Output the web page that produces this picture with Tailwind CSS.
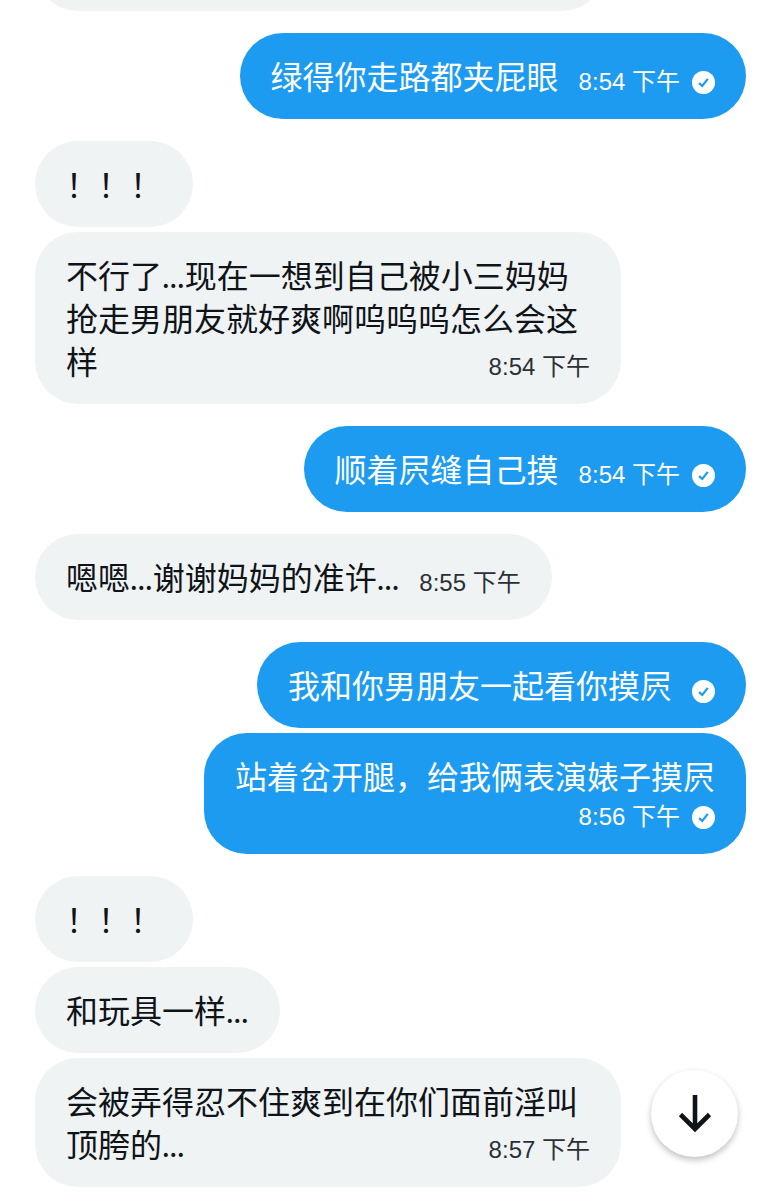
<!DOCTYPE html>
<html lang="zh-CN">
<head>
    <meta charset="UTF-8">
    <meta name="viewport" content="width=device-width, initial-scale=1.0">
    <title>私信</title>
    <script src="https://cdn.jsdelivr.net/npm/@tailwindcss/browser@4"></script>
</head>
<body class="bg-white h-screen overflow-hidden font-['Lato','Noto_Sans_CJK_SC',sans-serif] text-[32px] leading-[43px] text-[#0f1419]">
    <!-- check mark shared by the sent messages -->
    <svg class="hidden">
        <symbol id="sent" viewBox="0 0 24 24">
            <circle cx="12" cy="12" r="12" fill="#fff"/>
            <path d="M7.4 12.6l3.3 3 5.800-7.400" fill="none" stroke="#1d9bf0" stroke-width="2.3"/>
        </symbol>
    </svg>

    <main class="flex flex-col gap-[22px] px-[35px]">
        <div class="h-[11px] w-[570px] flex items-end">
            <div class="h-[86px] w-full shrink-0 rounded-[43px] bg-[#eff3f4]"></div>
        </div>

        <div class="flex flex-col items-end">
            <div class="flex items-end rounded-[43px] bg-[#1d9bf0] text-white pt-[22px] pb-[21px] px-[31px]">
                <p>绿得你走路都夹屁眼</p>
                <div class="flex items-center gap-3 ml-5 font-['Liberation_Sans','Noto_Sans_CJK_SC',sans-serif] text-2xl leading-8">
                    <time>8:54 下午</time>
                    <svg class="size-[23px]"><use href="#sent"/></svg>
                </div>
            </div>
        </div>

        <div class="flex flex-col items-start gap-[5px]">
            <div class="rounded-[43px] bg-[#eff3f4] pt-[22px] pb-[21px] px-[31px]">
                <p>！！！</p>
            </div>
            <div class="w-[586px] max-w-[83%] rounded-[43px] bg-[#eff3f4] pt-[22px] pb-[21px] px-[31px]">
                <p>不行了...现在一想到自己被小三妈妈抢走男朋友就好爽啊呜呜呜怎么会这样<time class="float-right mt-[11px] font-['Liberation_Sans','Noto_Sans_CJK_SC',sans-serif] text-2xl leading-8 text-[#2b3036]">8:54 下午</time></p>
            </div>
        </div>

        <div class="flex flex-col items-end">
            <div class="flex items-end rounded-[43px] bg-[#1d9bf0] text-white pt-[22px] pb-[21px] px-[31px]">
                <p>顺着屄缝自己摸</p>
                <div class="flex items-center gap-3 ml-5 font-['Liberation_Sans','Noto_Sans_CJK_SC',sans-serif] text-2xl leading-8">
                    <time>8:54 下午</time>
                    <svg class="size-[23px]"><use href="#sent"/></svg>
                </div>
            </div>
        </div>

        <div class="flex flex-col items-start">
            <div class="flex items-end rounded-[43px] bg-[#eff3f4] pt-[22px] pb-[21px] px-[31px]">
                <p>嗯嗯...谢谢妈妈的准许...</p>
                <time class="ml-5 font-['Liberation_Sans','Noto_Sans_CJK_SC',sans-serif] text-2xl leading-8 text-[#2b3036]">8:55 下午</time>
            </div>
        </div>

        <div class="flex flex-col items-end gap-[5px]">
            <div class="flex items-end rounded-[43px] bg-[#1d9bf0] text-white pt-[22px] pb-[21px] px-[31px]">
                <p>我和你男朋友一起看你摸屄</p>
                <div class="flex items-center h-8 ml-5">
                    <svg class="size-[23px]"><use href="#sent"/></svg>
                </div>
            </div>
            <div class="rounded-[43px] bg-[#1d9bf0] text-white pt-[22px] pb-[21px] px-[31px]">
                <p>站着岔开腿，给我俩表演婊子摸屄</p>
                <div class="flex items-center justify-end gap-3 pt-[3px] font-['Liberation_Sans','Noto_Sans_CJK_SC',sans-serif] text-2xl leading-8">
                    <time>8:56 下午</time>
                    <svg class="size-[23px]"><use href="#sent"/></svg>
                </div>
            </div>
        </div>

        <div class="flex flex-col items-start gap-[5px]">
            <div class="rounded-[43px] bg-[#eff3f4] pt-[22px] pb-[21px] px-[31px]">
                <p>！！！</p>
            </div>
            <div class="rounded-[43px] bg-[#eff3f4] pt-[22px] pb-[21px] px-[31px]">
                <p>和玩具一样...</p>
            </div>
            <div class="w-[586px] max-w-[83%] rounded-[43px] bg-[#eff3f4] pt-[22px] pb-[21px] px-[31px]">
                <p>会被弄得忍不住爽到在你们面前淫叫顶胯的...<time class="float-right mt-[11px] font-['Liberation_Sans','Noto_Sans_CJK_SC',sans-serif] text-2xl leading-8 text-[#2b3036]">8:57 下午</time></p>
            </div>
        </div>
    </main>

    <button type="button" aria-label="滚动到底部" class="fixed right-[43px] bottom-[43px] size-[87px] rounded-full bg-white flex items-center justify-center shadow-[0_3px_6px_rgba(0,0,0,0.25)]">
        <svg class="size-11" viewBox="0 0 44 44" fill="none" stroke="#0f1419" stroke-width="4.6">
            <path d="M22 3v35M7.500 22.500l14.500 14.500 14.500-14.500"/>
        </svg>
    </button>
</body>
</html>
